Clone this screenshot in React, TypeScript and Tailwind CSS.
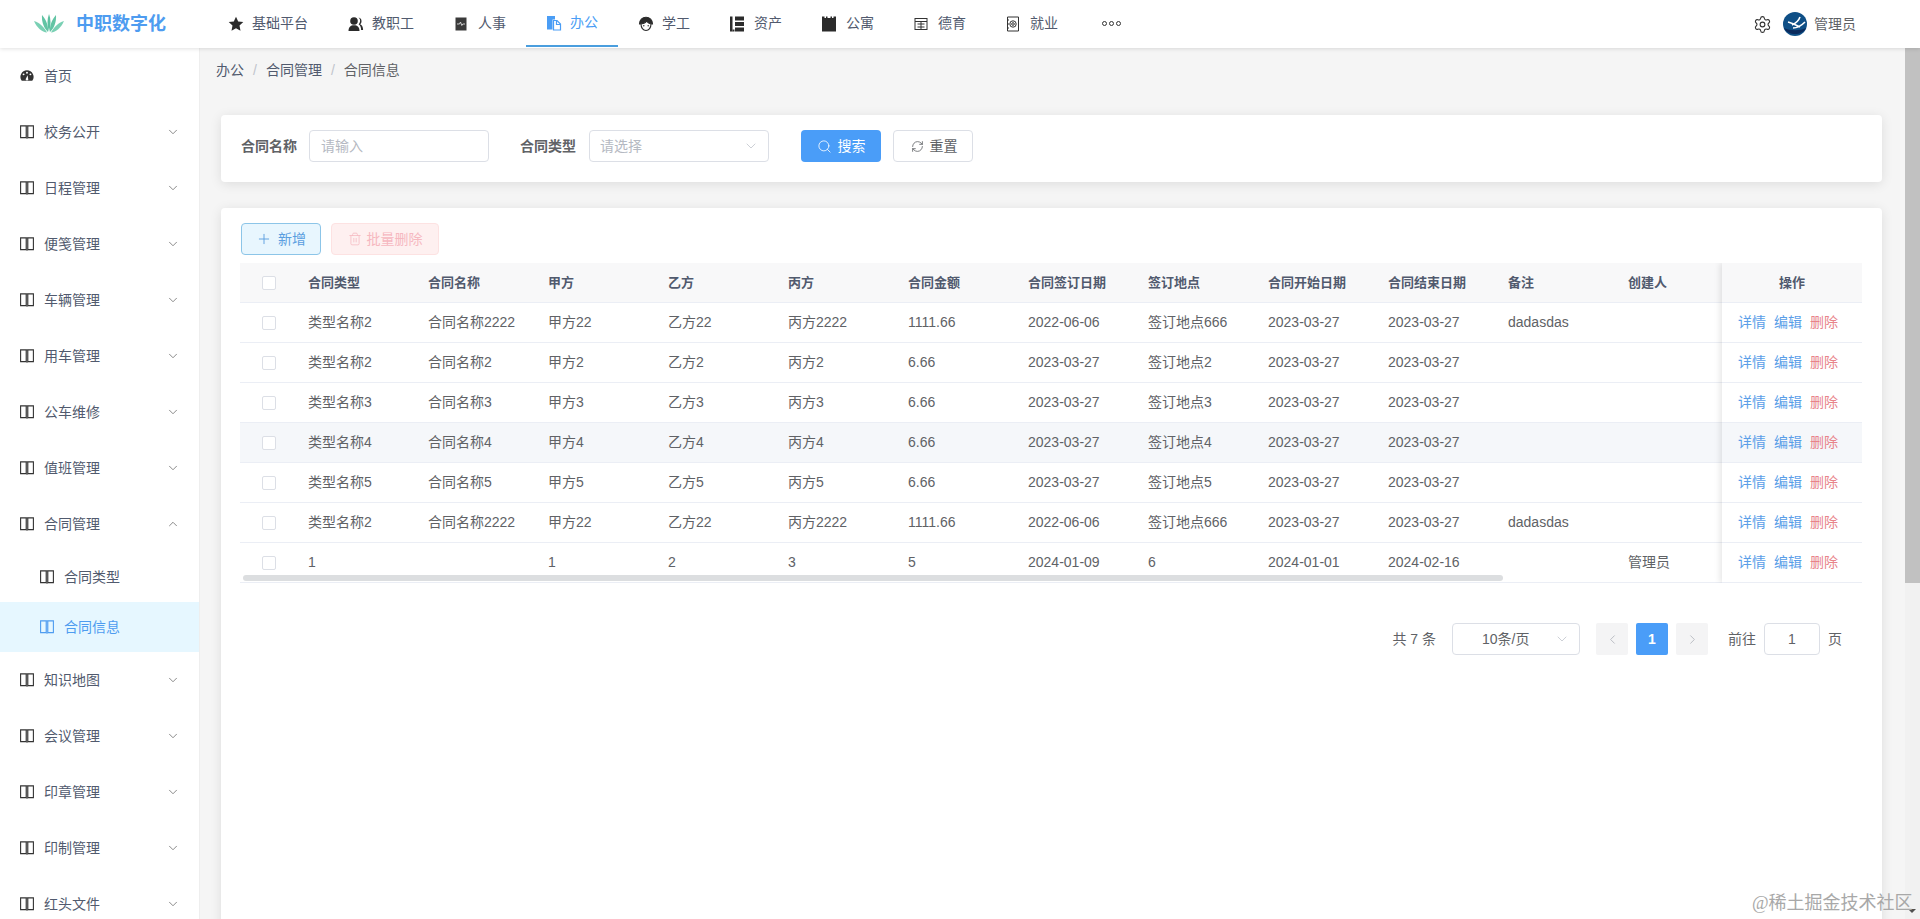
import { ChevronDown, ChevronUp, ChevronLeft, ChevronRight, Plus, Trash2, Search, RefreshCw, Settings } from 'lucide-react'

const font = { fontFamily: '"Liberation Sans","Noto Sans CJK SC",sans-serif' }

function BookIcon({ className = '' }: { className?: string }) {
  return (
    <svg viewBox="0 0 14 14" className={className} fill="none" stroke="currentColor" strokeWidth="1.1">
      <path d="M.6.9h5.600v11.700H.6z" />
      <path d="M7.800.9h5.600v11.700H7.800z" />
      <path d="M6.200 13.200h1.600M6.200.9h1.600" strokeOpacity="0.6" />
      <path d="M7 1v12" strokeOpacity="0.35" strokeWidth="1.400" />
    </svg>
  )
}

function Logo() {
  return (
    <svg viewBox="0 0 30 20" className="w-[30px] h-[20px]">
      <path d="M15 0c-2 5-2 11 0 18 2-7 2-13 0-18z" fill="#5cc0a0" />
      <path d="M8 1c-.5 6 1.500 13 6 17 .5-6-1.500-12-6-17z" fill="#62c4a4" />
      <path d="M22 1c.5 6-1.500 13-6 17-.5-6 1.500-12 6-17z" fill="#62c4a4" />
      <path d="M0 7c3 7 8 11 13 11.500C10 13 6 9 0 7z" fill="#7ad0b4" />
      <path d="M30 7c-3 7-8 11-13 11.500 3-5.500 7-9.500 13-11.500z" fill="#7ad0b4" />
    </svg>
  )
}

const navIcons: Record<string, React.ReactNode> = {
  基础平台: (
    <svg viewBox="0 0 16 16" className="w-[16px] h-[16px]" fill="#2b2b2b">
      <path d="M8 .8l2.200 4.700 5.100.6-3.800 3.500 1 5.100L8 12.200l-4.500 2.500 1-5.100L.7 6.100l5.100-.6z" />
    </svg>
  ),
  教职工: (
    <svg viewBox="0 0 16 16" className="w-[16px] h-[16px]" fill="#2b2b2b">
      <circle cx="6" cy="5" r="3.800" />
      <path d="M0.500 15c0-4 2-5.800 5.500-5.800s5.500 1.800 5.500 5.800z" />
      <path d="M10.500 1.600c2 .3 3 1.800 3 3.600 0 1.300-.5 2.400-1.400 3 1.900.8 3 2.700 3 5.800h-2c0-2.800-.8-4.800-2.500-5.800 1-1 1.500-2.100 1.500-3.400 0-1.200-.4-2.300-1.600-3.200z" />
    </svg>
  ),
  人事: (
    <svg viewBox="0 0 14 14" className="w-[14px] h-[14px]">
      <rect x="1.500" y="0.500" width="11" height="13" fill="#3a3a3a" />
      <path d="M3 7h2.500l1-2 1.300 3.500 1-1.500H11" fill="none" stroke="#ddd" strokeWidth="0.900" />
    </svg>
  ),
  办公: (
    <svg viewBox="0 0 16 16" className="w-[16px] h-[16px]">
      <path d="M1 1h8v3.500H6.500V14.500H1z" fill="#4a9df5" />
      <path d="M7.500 5.500H11l3.500 3.500v6h-7z" fill="none" stroke="#4a9df5" strokeWidth="1.200" />
      <path d="M10.500 5.500v4h4" fill="none" stroke="#4a9df5" strokeWidth="1.200" />
    </svg>
  ),
  学工: (
    <svg viewBox="0 0 16 16" className="w-[16px] h-[16px]" fill="none" stroke="#2b2b2b" strokeWidth="1.100">
      <path d="M1.500 8c0-4 2.800-6.800 6.500-6.800S14.500 4 14.500 8c-2 0-4.500-1-5.800-3C7.500 7 4 8 1.500 8z" fill="#2b2b2b" />
      <path d="M3 8c0 3.500 2 6.500 5 6.500s5-3 5-6.500" />
      <circle cx="5.800" cy="9.800" r=".7" fill="#2b2b2b" stroke="none" />
      <circle cx="10.200" cy="9.800" r=".7" fill="#2b2b2b" stroke="none" />
    </svg>
  ),
  资产: (
    <svg viewBox="0 0 14 16" className="w-[14px] h-[16px]" fill="#2b2b2b">
      <rect x="0" y="0.500" width="2.500" height="15" />
      <rect x="2.500" y="13.500" width="2" height="2" />
      <rect x="5" y="0.500" width="9" height="4" />
      <rect x="5" y="6" width="9" height="4" />
      <rect x="5" y="11.500" width="9" height="4" />
    </svg>
  ),
  公寓: (
    <svg viewBox="0 0 14 16" className="w-[14px] h-[16px]" fill="#2b2b2b">
      <path d="M0 .5h2.500v1.500h1.500V.5h1.500v1.500h3V.5h1.500v1.500h1.500V.5H14v15H0z" />
    </svg>
  ),
  德育: (
    <svg viewBox="0 0 14 14" className="w-[14px] h-[14px]" fill="none" stroke="#333" strokeWidth="1">
      <rect x="1" y="1.500" width="12" height="11" />
      <path d="M1 4.500h12M3.500 7h7M3.500 10h7M7 4.500v8" />
    </svg>
  ),
  就业: (
    <svg viewBox="0 0 14 16" className="w-[14px] h-[16px]" fill="none" stroke="#333" strokeWidth="1">
      <path d="M1.500 1h11v14h-11z" />
      <circle cx="7" cy="8" r="3.200" />
      <circle cx="7" cy="8" r="1.300" />
      <path d="M1 4h2M1 8h2M1 12h2" />
    </svg>
  ),
}

const navs = [
  { name: '基础平台', w: 'w-[120px]' },
  { name: '教职工', w: 'w-[106px]' },
  { name: '人事', w: 'w-[92px]' },
  { name: '办公', w: 'w-[92px]', active: true },
  { name: '学工', w: 'w-[92px]' },
  { name: '资产', w: 'w-[92px]' },
  { name: '公寓', w: 'w-[92px]' },
  { name: '德育', w: 'w-[92px]' },
  { name: '就业', w: 'w-[92px]' },
]

const sideTop = ['校务公开', '日程管理', '便笺管理', '车辆管理', '用车管理', '公车维修', '值班管理']
const sideBottom = ['知识地图', '会议管理', '印章管理', '印制管理', '红头文件']

const cols = ['合同类型', '合同名称', '甲方', '乙方', '丙方', '合同金额', '合同签订日期', '签订地点', '合同开始日期', '合同结束日期', '备注', '创建人']

const rows = [
  ['类型名称2', '合同名称2222', '甲方22', '乙方22', '丙方2222', '1111.66', '2022-06-06', '签订地点666', '2023-03-27', '2023-03-27', 'dadasdas', ''],
  ['类型名称2', '合同名称2', '甲方2', '乙方2', '丙方2', '6.66', '2023-03-27', '签订地点2', '2023-03-27', '2023-03-27', '', ''],
  ['类型名称3', '合同名称3', '甲方3', '乙方3', '丙方3', '6.66', '2023-03-27', '签订地点3', '2023-03-27', '2023-03-27', '', ''],
  ['类型名称4', '合同名称4', '甲方4', '乙方4', '丙方4', '6.66', '2023-03-27', '签订地点4', '2023-03-27', '2023-03-27', '', ''],
  ['类型名称5', '合同名称5', '甲方5', '乙方5', '丙方5', '6.66', '2023-03-27', '签订地点5', '2023-03-27', '2023-03-27', '', ''],
  ['类型名称2', '合同名称2222', '甲方22', '乙方22', '丙方2222', '1111.66', '2022-06-06', '签订地点666', '2023-03-27', '2023-03-27', 'dadasdas', ''],
  ['1', '', '1', '2', '3', '5', '2024-01-09', '6', '2024-01-01', '2024-02-16', '', '管理员'],
]

function SideItem({ name, open }: { name: string; open?: boolean }) {
  return (
    <div className="h-[56px] shrink-0 flex items-center pl-[20px] pr-[19px] text-[14px] text-[#515a6e]">
      <BookIcon className="w-[14px] h-[14px] text-[#333] mr-[10px]" />
      <span className="flex-1">{name}</span>
      {open ? <ChevronUp className="w-[14px] h-[14px] text-[#666]" strokeWidth={1.3} /> : <ChevronDown className="w-[14px] h-[14px] text-[#666]" strokeWidth={1.3} />}
    </div>
  )
}

function Checkbox() {
  return <span className="block w-[14px] h-[14px] border border-[#dcdfe6] rounded-[2px] bg-white" />
}

export default function App() {
  return (
    <div style={font} className="relative h-[919px] w-[1920px] overflow-hidden flex flex-col bg-[#f5f5f5]">
      {/* top bar */}
      <header className="relative z-20 h-[48px] shrink-0 bg-white shadow-[0_1px_4px_rgba(0,0,0,0.12)] flex items-center">
        <div className="w-[208px] shrink-0 flex items-center pl-[34px]">
          <Logo />
          <span className="ml-[12px] text-[18px] font-bold text-[#4e9cf0] whitespace-nowrap">中职数字化</span>
        </div>
        <nav className="flex h-full">
          {navs.map((n) => (
            <div
              key={n.name}
              className={
                n.active
                  ? `${n.w} h-[47px] pl-[20px] flex items-center text-[14px] text-[#4a9df5] border-b-2 border-[#4a9ede]`
                  : `${n.w} h-[47px] pl-[20px] flex items-center text-[14px] text-[#515a6e]`
              }
            >
              <span className="w-[24px] shrink-0 flex items-center">{navIcons[n.name]}</span>
              <span className="whitespace-nowrap">{n.name}</span>
            </div>
          ))}
          <div className="ml-[24px] h-[47px] flex items-center gap-[2px]">
            <span className="w-[5px] h-[5px] rounded-full border border-[#333]" />
            <span className="w-[5px] h-[5px] rounded-full border border-[#333]" />
            <span className="w-[5px] h-[5px] rounded-full border border-[#333]" />
          </div>
        </nav>
        <div className="ml-auto pr-[64px] flex items-center">
          <Settings className="w-[19px] h-[19px] text-[#333] mr-[11px]" strokeWidth={1.4} />
          <svg viewBox="0 0 24 24" className="w-[24px] h-[24px] mr-[7px]">
            <ellipse cx="12" cy="12" rx="12" ry="12" fill="#0f4f86" />
            <path d="M1 16c4 8 18 8 22 0-6 3-16 3-22 0z" fill="#0a2a5c" />
            <path d="M5 10c4 1 8 3 12 5M17 5c-1 3-4 6-8 8M10 16c4 0 8-2 12-6" fill="none" stroke="#fff" strokeWidth="1.600" />
          </svg>
          <span className="text-[14px] text-[#606266]">管理员</span>
        </div>
      </header>

      <div className="flex-1 flex min-h-0">
        {/* sidebar */}
        <aside className="relative z-10 w-[200px] shrink-0 bg-white border-r border-[#eeeeee] overflow-hidden flex flex-col">
          <div className="h-[56px] shrink-0 flex items-center pl-[20px] text-[14px] text-[#515a6e]">
            <svg viewBox="0 0 16 16" className="w-[14px] h-[14px] mr-[10px]" fill="#333">
              <path d="M8 1.500a7.500 7.500 0 0 0-6 12h12a7.500 7.500 0 0 0-6-12zM8 3.200a1.100 1.100 0 1 1 0 2.200 1.100 1.100 0 0 1 0-2.200zM4.100 5a1.100 1.100 0 1 1 0 2.200 1.100 1.100 0 0 1 0-2.200zM11.900 5a1.100 1.100 0 1 1 0 2.200 1.100 1.100 0 0 1 0-2.200zM8.700 7l.6 4a1.400 1.400 0 1 1-2.600 0z" fillRule="evenodd" />
            </svg>
            首页
          </div>
          {sideTop.map((s) => <SideItem key={s} name={s} />)}
          <SideItem name="合同管理" open />
          <div className="h-[50px] shrink-0 flex items-center pl-[40px] text-[14px] text-[#515a6e]">
            <BookIcon className="w-[14px] h-[14px] text-[#333] mr-[10px]" />
            合同类型
          </div>
          <div className="h-[50px] shrink-0 flex items-center pl-[40px] text-[14px] text-[#4e9cf0] bg-[#e6f7ff]">
            <BookIcon className="w-[14px] h-[14px] mr-[10px]" />
            合同信息
          </div>
          {sideBottom.map((s) => <SideItem key={s} name={s} />)}
        </aside>

        {/* main */}
        <main className="flex-1 min-w-0 overflow-hidden pl-[21px] pr-[23px]">
          <div className="h-[67px] pt-[14px] -ml-[5px] flex items-start text-[14px] leading-[16px] text-[#515a6e]">
            <span>办公</span>
            <span className="mx-[9px] text-[#c0c4cc]">/</span>
            <span>合同管理</span>
            <span className="mx-[9px] text-[#c0c4cc]">/</span>
            <span className="text-[#606266]">合同信息</span>
          </div>

          <section className="h-[67px] bg-white rounded-[4px] shadow-[0_2px_12px_0_rgba(0,0,0,0.1)] flex items-start pt-[15px] pl-[20px] text-[14px] leading-[30px]">
            <span className="w-[56px] leading-[32px] font-bold text-[#606266] whitespace-nowrap">合同名称</span>
            <div className="ml-[12px] w-[180px] h-[32px] border border-[#dcdfe6] rounded-[4px] px-[11px] flex items-center text-[#b5b9c2]">请输入</div>
            <span className="ml-[31px] w-[56px] leading-[32px] font-bold text-[#606266] whitespace-nowrap">合同类型</span>
            <div className="ml-[13px] w-[180px] h-[32px] border border-[#dcdfe6] rounded-[4px] pl-[10px] pr-[9px] flex items-center justify-between text-[#b5b9c2]">
              请选择
              <ChevronDown className="w-[16px] h-[16px] text-[#c0c4cc]" strokeWidth={1.2} />
            </div>
            <button className="ml-[32px] w-[80px] h-[32px] rounded-[4px] bg-[#4a9df8] text-white flex items-center justify-center gap-[6px]">
              <Search className="w-[15px] h-[15px]" strokeWidth={1.3} />
              搜索
            </button>
            <button className="ml-[12px] w-[80px] h-[32px] rounded-[4px] border border-[#dcdfe6] text-[#606266] flex items-center justify-center gap-[6px] pl-[2px]">
              <RefreshCw className="w-[13px] h-[13px]" strokeWidth={1.5} />
              重置
            </button>
          </section>

          <section className="mt-[26px] h-[760px] bg-white rounded-[4px] shadow-[0_2px_12px_0_rgba(0,0,0,0.1)] pt-[15px] pl-[19px]">
            <div className="ml-[1px] flex gap-[10px] text-[14px]">
              <button className="w-[80px] h-[32px] rounded-[4px] border border-[#8cc5e8] bg-[#e8f6fe] text-[#5a9ee0] flex items-center justify-center gap-[6px]">
                <Plus className="w-[16px] h-[16px]" strokeWidth={1.4} />
                新增
              </button>
              <button className="w-[108px] h-[32px] rounded-[4px] border border-[#fde2e2] bg-[#fef0f0] text-[#f6b8c0] flex items-center justify-center gap-[5px]">
                <Trash2 className="w-[14px] h-[14px]" strokeWidth={1.3} />
                批量删除
              </button>
            </div>

            <div className="relative mt-[8px] w-[1622px] overflow-hidden text-[14px]">
              <div className="flex h-[40px] bg-[#f8f8f9] border-b border-[#ebeef5] items-center text-[13px] font-bold text-[#515a6e]">
                <div className="w-[56px] shrink-0 pl-[22px]"><Checkbox /></div>
                {cols.map((c) => (
                  <div key={c} className="w-[120px] shrink-0 pl-[12px] whitespace-nowrap">{c}</div>
                ))}
              </div>
              {rows.map((r, i) => (
                <div key={i} className={i === 3 ? 'flex h-[40px] items-center border-b border-[#ebeef5] text-[#606266] bg-[#f5f7fa]' : 'flex h-[40px] items-center border-b border-[#ebeef5] text-[#606266]'}>
                  <div className="w-[56px] shrink-0 pl-[22px]"><Checkbox /></div>
                  {r.map((c, j) => (
                    <div key={j} className="w-[120px] shrink-0 pl-[12px] whitespace-nowrap">{c}</div>
                  ))}
                </div>
              ))}

              {/* fixed action column */}
              <div className="absolute right-0 top-0 w-[140px] shadow-[-2px_0_6px_rgba(0,0,0,0.1)]">
                <div className="h-[40px] bg-[#f8f8f9] border-b border-[#ebeef5] flex items-center justify-center text-[13px] font-bold text-[#515a6e]">操作</div>
                {rows.map((_, i) => (
                  <div key={i} className={i === 3 ? 'h-[40px] border-b border-[#ebeef5] flex items-center pl-[16px] gap-[8px] bg-[#f5f7fa]' : 'h-[40px] border-b border-[#ebeef5] flex items-center pl-[16px] gap-[8px] bg-white'}>
                    <span className="text-[#5a9ee8]">详情</span>
                    <span className="text-[#5a9ee8]">编辑</span>
                    <span className="text-[#e8838a]">删除</span>
                  </div>
                ))}
              </div>

              {/* table scrollbar */}
              <div className="absolute left-[3px] top-[312px] w-[1260px] h-[6px] rounded-[3px] bg-[#dcdee0]" />
            </div>

            {/* pagination */}
            <div className="mt-[40px] w-[1602px] flex items-center justify-end text-[14px] text-[#606266]">
              <span className="mr-[16px]">共 7 条</span>
              <div className="w-[128px] h-[32px] border border-[#dcdfe6] rounded-[4px] flex items-center pl-[29px] pr-[9px] justify-between">
                10条/页
                <ChevronDown className="w-[16px] h-[16px] text-[#c0c4cc]" strokeWidth={1.2} />
              </div>
              <div className="ml-[16px] w-[32px] h-[32px] rounded-[2px] bg-[#f4f4f5] flex items-center justify-center text-[#a8acb4]">
                <ChevronLeft className="w-[15px] h-[15px]" strokeWidth={1.2} />
              </div>
              <div className="ml-[8px] w-[32px] h-[32px] rounded-[2px] bg-[#4a9df8] flex items-center justify-center font-bold text-white">1</div>
              <div className="ml-[8px] w-[32px] h-[32px] rounded-[2px] bg-[#f4f4f5] flex items-center justify-center text-[#a8acb4]">
                <ChevronRight className="w-[15px] h-[15px]" strokeWidth={1.2} />
              </div>
              <span className="ml-[20px]">前往</span>
              <div className="ml-[8px] w-[56px] h-[32px] border border-[#dcdfe6] rounded-[4px] flex items-center justify-center">1</div>
              <span className="ml-[8px]">页</span>
            </div>
          </section>
        </main>

        {/* page scrollbar */}
        <div className="relative w-[15px] shrink-0 bg-[#f1f1f1]">
          <div className="h-[535px] bg-[#c1c1c1]" />
          <span className="absolute left-[3px] bottom-[6px] w-0 h-0 border-x-[4px] border-x-transparent border-t-[4px] border-t-[#505050]" />
        </div>
      </div>

      {/* watermark */}
      <span className="absolute left-[1752px] top-[891px] text-[18px] leading-[24px] text-[#a8a8a8] whitespace-nowrap" style={{ fontFamily: '"Liberation Serif","Noto Sans CJK SC",serif' }}>@稀土掘金技术社区</span>
    </div>
  )
}
